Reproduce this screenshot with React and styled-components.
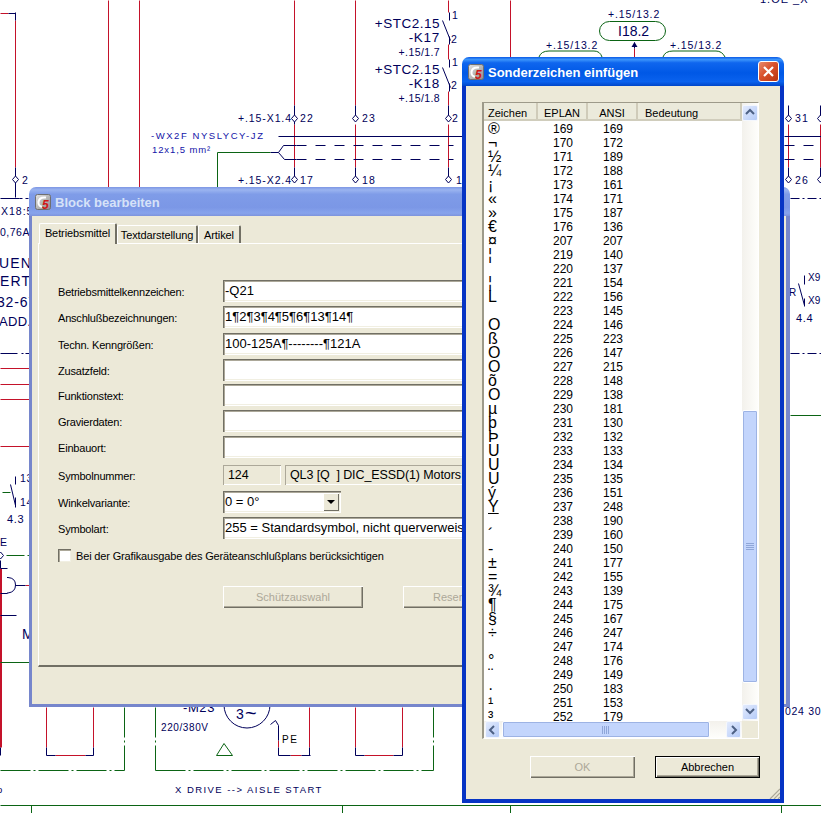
import styled, { createGlobalStyle } from 'styled-components';

const NAVY = '#00005a';
const RED = '#c4122a';
const GREEN = '#0b6414';
const BLUE = '#1414a8';

const GlobalStyle = createGlobalStyle`
  html, body {
    margin: 0;
    padding: 0;
    background: #fff;
  }

  body {
    font-family: "Liberation Sans", Arial, sans-serif;
    font-size: 12px;
    color: #000;
  }
`;

const StyledDesktop = styled.div`
  position: relative;
  width: 821px;
  height: 813px;
  overflow: hidden;
  background: #fff;
`;

const StyledSchematic = styled.svg`
  position: absolute;
  left: 0;
  top: 0;
`;

const StyledSchematicText = styled.text`
  font-family: "Liberation Sans", Arial, sans-serif;
  font-size: ${({ $size }) => $size}px;
  letter-spacing: ${({ $spacing }) => $spacing}px;
  fill: ${({ $color }) => $color};
  text-anchor: ${({ $anchor }) => $anchor};
`;

const StyledWindow = styled.section`
  position: absolute;
  left: ${({ $left }) => $left}px;
  top: ${({ $top }) => $top}px;
  width: ${({ $width }) => $width}px;
  height: ${({ $height }) => $height}px;
  display: flex;
  flex-direction: column;
`;

const StyledTitleBar = styled.header`
  flex: none;
  height: 29px;
  box-sizing: border-box;
  display: flex;
  align-items: center;
  gap: 4px;
  padding: 0 5px 0 6px;
  border-radius: 7px 7px 0 0;
  background: ${({ $active }) =>
    $active
      ? 'linear-gradient(180deg, #0a5ae6 0%, #3c95fb 9%, #0f66ee 20%, #0058e6 55%, #0a62ee 85%, #0046c8 100%)'
      : 'linear-gradient(180deg, #7d96e4 0%, #9ab4f0 10%, #7f9ce8 25%, #7b97e6 70%, #87a3ec 90%, #7d93dc 100%)'};
`;

const StyledTitle = styled.h1`
  flex: 1;
  margin: 0;
  padding-top: 2px;
  font-size: 13px;
  font-weight: 700;
  color: ${({ $active }) => ($active ? '#fff' : '#d6e2f8')};
`;

const StyledClose = styled.button`
  width: 21px;
  height: 21px;
  padding: 0;
  display: grid;
  place-items: center;
  border: 1px solid #fff;
  border-radius: 3px;
  background: linear-gradient(135deg, #e88a6c 0%, #d9512c 45%, #b93410 100%);
`;

const StyledBody = styled.div`
  position: relative;
  flex: 1;
  min-height: 0;
  display: flex;
  flex-direction: column;
  background: #ece9d8;
  border-style: solid;
  border-color: ${({ $active }) => ($active ? '#0634c4' : '#7686cc')};
  border-width: 0 4px 4px 4px;
`;

const StyledBlockBody = styled(StyledBody)`
  border-width: 0 4px 3px 3px;
  padding: 7px 6px 37px 6px;
`;

const StyledTabs = styled.ul`
  flex: none;
  display: flex;
  align-items: flex-end;
  height: 20px;
  margin: 0;
  padding: 0 0 0 1px;
  list-style: none;
`;

const StyledTab = styled.li`
  position: relative;
  z-index: ${({ $selected }) => ($selected ? 1 : 0)};
  height: ${({ $selected }) => ($selected ? '21px' : '18px')};
  margin-bottom: ${({ $selected }) => ($selected ? '-1px' : '0')};
  width: ${({ $width }) => $width}px;
  box-sizing: border-box;
  padding-top: 3px;
  text-align: center;
  font-size: 11px;
  letter-spacing: -0.1px;
  background: #ece9d8;
  border-top: 1px solid #fff;
  border-left: 1px solid #fff;
  border-right: 2px solid #716f64;
  border-radius: 2px 2px 0 0;
`;

const StyledPanel = styled.div`
  flex: 1;
  box-sizing: border-box;
  padding: 36px 19px 0;
  border-top: 1px solid #fff;
  border-left: 1px solid #fff;
  border-right: 2px solid #716f64;
  border-bottom: 2px solid #716f64;
`;

const StyledFormRow = styled.div`
  display: grid;
  grid-template-columns: 165px 1fr;
  align-items: center;
  height: 22px;
  margin-top: ${({ $gap }) => $gap}px;
`;

const StyledLabel = styled.label`
  font-size: 11px;
  letter-spacing: -0.2px;
  padding-top: 1px;
`;

const StyledField = styled.div`
  box-sizing: border-box;
  height: 22px;
  padding: 3px 2px 0;
  font-size: 13px;
  line-height: 16px;
  white-space: pre;
  overflow: hidden;
  background: #fff;
  box-shadow: inset 1px 1px 0 #716f64, inset 2px 2px 0 #aca899, inset -1px -1px 0 #fff, inset -2px -2px 0 #f1efe2;
`;

const StyledSymbolFields = styled.div`
  display: grid;
  grid-template-columns: 58px 1fr;
  gap: 4px;
`;

const StyledReadonlyField = styled(StyledField)`
  height: 20px;
  padding: 2px 5px 0;
  font-size: 12.5px;
  letter-spacing: -0.1px;
  background: #ece9d8;
  box-shadow: inset 1px 1px 0 #aca899, inset -1px -1px 0 #fff;
`;

const StyledSelect = styled(StyledField)`
  width: 118px;
  position: relative;
`;

const StyledSelectArrow = styled.span`
  position: absolute;
  right: 2px;
  top: 2px;
  width: 16px;
  height: 18px;
  display: grid;
  place-items: center;
  background: #ece9d8;
  box-shadow: inset 1px 1px 0 #fff, inset -1px -1px 0 #716f64;

  &::after {
    content: '';
    border-left: 4px solid transparent;
    border-right: 4px solid transparent;
    border-top: 4px solid #000;
  }
`;

const StyledCheckRow = styled.div`
  display: flex;
  align-items: center;
  gap: 5px;
  margin-top: 10px;
  height: 13px;
  font-size: 11px;
  letter-spacing: -0.16px;
`;

const StyledCheckbox = styled.span`
  width: 13px;
  height: 13px;
  box-sizing: border-box;
  background: #fff;
  box-shadow: inset 1px 1px 0 #716f64, inset 2px 2px 0 #aca899, inset -1px -1px 0 #f1efe2;
`;

const StyledFormButtons = styled.div`
  display: flex;
  gap: 40px;
  margin: 24px 0 0 165px;
`;

const StyledButton = styled.button`
  flex: none;
  width: ${({ $width }) => $width}px;
  height: 22px;
  padding: 0;
  font-family: inherit;
  font-size: 11px;
  color: ${({ disabled }) => (disabled ? '#aca899' : '#000')};
  text-align: ${({ $align }) => $align || 'center'};
  padding-left: ${({ $indent }) => $indent || 0}px;
  background: #ece9d8;
  border: ${({ $default }) => ($default ? '1px solid #000' : '0')};
  box-shadow: inset 1px 1px 0 #fff, inset -1px -1px 0 #716f64, inset -2px -2px 0 #aca899;
`;

const StyledListBox = styled.div`
  flex: none;
  width: 277px;
  height: 637px;
  box-sizing: border-box;
  display: grid;
  grid-template-columns: 1fr 16px;
  grid-template-rows: 1fr 17px;
  border-top: 1px solid #9d9a8a;
  border-left: 2px solid #9d9a8a;
  border-right: 1px solid #fff;
  border-bottom: 1px solid #fff;
  background: #fff;
`;

const StyledListPane = styled.div`
  min-width: 0;
  overflow: hidden;
`;

const StyledListHeader = styled.div`
  display: grid;
  grid-template-columns: 54px 50px 50px 1fr;
  height: 18px;
  margin-bottom: 1px;
  background: #ebeadb;
  border-bottom: 2px solid #d0cdbc;
  box-sizing: border-box;
  font-size: 11px;
`;

const StyledHeaderCell = styled.div`
  box-sizing: border-box;
  padding: 4px 0 0 ${({ $indent }) => $indent || 0}px;
  text-align: ${({ $center }) => ($center ? 'center' : 'left')};
  border-right: 2px solid #cfcbb9;
`;

const StyledListRow = styled.div`
  display: grid;
  grid-template-columns: 54px 50px 50px;
  height: 14px;
  line-height: 14px;
`;

const StyledGlyph = styled.span`
  padding-left: 4px;
  font-size: 16px;
  line-height: 14px;
  text-decoration: ${({ $underline }) => ($underline ? 'underline' : 'none')};
`;

const StyledNumber = styled.span`
  text-align: center;
`;

const StyledScrollTrack = styled.div`
  box-sizing: border-box;
  display: flex;
  flex-direction: ${({ $horizontal }) => ($horizontal ? 'row' : 'column')};
  gap: 2px;
  padding: ${({ $horizontal }) => ($horizontal ? '0 1px' : '2px 0 1px')};
  background: ${({ $horizontal }) =>
    $horizontal ? 'linear-gradient(180deg, #f3f1ec, #fefefb)' : 'linear-gradient(90deg, #f3f1ec, #fefefb)'};
`;

const StyledScrollButton = styled.span`
  flex: none;
  width: ${({ $horizontal }) => ($horizontal ? '15px' : '100%')};
  height: ${({ $horizontal }) => ($horizontal ? '100%' : '16px')};
  margin: ${({ $horizontal, $last }) => ($last ? ($horizontal ? '0 0 0 auto' : 'auto 0 0') : '0')};
  box-sizing: border-box;
  display: grid;
  place-items: center;
  border: 1px solid #f4f7fd;
  border-radius: 2px;
  background: linear-gradient(135deg, #e3ebfd, #b5cbf8);
`;

const StyledScrollThumb = styled.span`
  flex: none;
  box-sizing: border-box;
  display: grid;
  place-items: center;
  border: 1px solid #fff;
  border-radius: 2px;
  box-shadow: 0 0 0 1px #9db3e4 inset;
  background: #c3d5fc;
  ${({ $horizontal, $start, $length }) =>
    $horizontal
      ? `width: ${$length}px; height: 100%;`
      : `height: ${$length}px; width: 100%; margin-top: ${$start}px;`}
`;

const StyledScrollCorner = styled.div`
  background: #ece9d8;
`;

const StyledDialogBody = styled(StyledBody)`
  padding: 16px 20px 0 16px;
`;

const StyledDialogButtons = styled.div`
  display: flex;
  justify-content: flex-end;
  gap: 20px;
  margin-top: 17px;
`;

const StyledGrip = styled.svg`
  position: absolute;
  right: 0;
  bottom: 0;
`;

// zeichen, eplan, ansi
const CHARACTERS = [
  ['®', 169, 169],
  ['¬', 170, 172],
  ['½', 171, 189],
  ['¼', 172, 188],
  ['¡', 173, 161],
  ['«', 174, 171],
  ['»', 175, 187],
  ['€', 176, 136],
  ['¤', 207, 207],
  ['¦', 219, 140],
  ['', 220, 137],
  ['¦', 221, 154],
  ['L', 222, 156],
  ['', 223, 145],
  ['O', 224, 146],
  ['ß', 225, 223],
  ['O', 226, 147],
  ['O', 227, 215],
  ['õ', 228, 148],
  ['O', 229, 138],
  ['µ', 230, 181],
  ['þ', 231, 130],
  ['Þ', 232, 132],
  ['U', 233, 133],
  ['U', 234, 134],
  ['U', 235, 135],
  ['ý', 236, 151],
  ['Y', 237, 248],
  ['', 238, 190],
  ['´', 239, 160],
  ['-', 240, 150],
  ['±', 241, 177],
  ['=', 242, 155],
  ['¾', 243, 139],
  ['¶', 244, 175],
  ['§', 245, 167],
  ['÷', 246, 247],
  ['', 247, 174],
  ['°', 248, 176],
  ['¨', 249, 149],
  ['·', 250, 183],
  ['¹', 251, 153],
  ['³', 252, 179],
];

const FORM_FIELDS = [
  ['Betriebsmittelkennzeichen:', '-Q21', 0],
  ['Anschlußbezeichnungen:', '1¶2¶3¶4¶5¶6¶13¶14¶', 4],
  ['Techn. Kenngrößen:', '100-125A¶--------¶121A', 5],
  ['Zusatzfeld:', '', 4],
  ['Funktionstext:', '', 3],
  ['Gravierdaten:', '', 4],
  ['Einbauort:', '', 4],
];

const NAVY_LINES = [
  [8, 13, 15, 13], [15, 12, 15, 20], [15, 167, 15, 176], [294, 105, 294, 115], [294, 121, 294, 124],
  [294, 167, 294, 176], [355, 105, 355, 115], [355, 167, 355, 176], [448, 105, 448, 115], [448, 167, 448, 176],
  [449, 12, 449, 20], [442, 20, 450, 40], [449, 36, 449, 44], [449, 59, 449, 67], [442, 67, 450, 87], [449, 83, 449, 91],
  [278, 136, 463, 136], [270, 152, 278, 152], [278, 152, 283, 145], [283, 145, 296, 145], [278, 152, 284, 159], [284, 159, 296, 159],
  [788, 105, 788, 115], [788, 167, 788, 176], [820, 105, 820, 115], [820, 167, 820, 176], [784, 136, 821, 136],
  [15, 180, 15, 197], [0, 198, 19, 198], [0, 353, 17, 353], [15, 476, 15, 484], [10, 484, 15, 505], [15, 497, 15, 507],
  [804, 275, 804, 284], [798, 283, 804, 305], [804, 298, 804, 306], [0, 560, 0, 568], [0, 568, 7, 568], [0, 593, 7, 593], [15, 585, 25, 585], [0, 615, 16, 615],
  [0, 747, 0, 755], [46, 747, 46, 755], [93, 747, 93, 755], [46, 755, 55, 755], [85, 755, 93, 755],
  [278, 725, 278, 740], [278, 747, 278, 755], [278, 755, 290, 755], [301, 755, 310, 755], [309, 747, 309, 755], [270, 724, 275, 720], [275, 720, 278, 725],
  [355, 747, 355, 755], [402, 747, 402, 755], [355, 755, 364, 755], [393, 755, 402, 755],
  [634, 42, 634, 48],
];

const RED_LINES = [
  [0, 13, 8, 13], [15, 20, 15, 167], [108, 0, 108, 187], [139, 0, 139, 187], [294, 0, 294, 105], [294, 124, 294, 167], [355, 0, 355, 105], [355, 124, 355, 167],
  [448, 0, 448, 12], [448, 44, 448, 59], [448, 91, 448, 105], [448, 124, 448, 167], [510, 0, 510, 57], [634, 48, 634, 57], [788, 124, 788, 167], [820, 124, 820, 167],
  [0, 368, 29, 368], [0, 384, 29, 384], [0, 399, 29, 399], [0, 446, 29, 446], [25, 585, 29, 585],
  [0, 568, 0, 747], [1, 568, 1, 747], [46, 707, 46, 747], [93, 707, 93, 747], [55, 755, 85, 755],
  [278, 740, 278, 747], [290, 755, 301, 755], [309, 707, 309, 747], [355, 707, 355, 747], [402, 707, 402, 747], [364, 755, 393, 755],
];

const GREEN_LINES = [
  [217, 152, 270, 152], [217, 152, 217, 187], [2, 492, 10, 492], [0, 662, 29, 662], [790, 415, 821, 415],
  [0, 805, 821, 805], [31, 805, 31, 813], [342, 805, 342, 813], [510, 805, 510, 813], [781, 805, 781, 813],
];

const LABELS = [
  ['+STC2.15', 440, 28, 13.5, NAVY, 'end', 0.5], ['-K17', 440, 42, 13.5, NAVY, 'end', 0.7], ['+.15/1.7', 440, 56, 10.5, NAVY, 'end', 0.4],
  ['+STC2.15', 440, 74, 13.5, NAVY, 'end', 0.5], ['-K18', 440, 88, 13.5, NAVY, 'end', 0.7], ['+.15/1.8', 440, 102, 10.5, NAVY, 'end', 0.4],
  ['1', 452, 19, 10.5, NAVY], ['2', 451, 43, 10.5, NAVY], ['1', 452, 66, 10.5, NAVY], ['2', 451, 89, 10.5, NAVY],
  ['+.15-X1.4', 238, 122, 10.5, NAVY, 'start', 0.9], ['22', 300, 122, 10.5, NAVY, 'start', 1.2], ['23', 362, 122, 10.5, NAVY, 'start', 1.2], ['2', 452, 122, 10.5, NAVY],
  ['+.15-X2.4', 238, 184, 10.5, NAVY, 'start', 0.9], ['17', 300, 184, 10.5, NAVY, 'start', 1.2], ['18', 362, 184, 10.5, NAVY, 'start', 1.2], ['1', 456, 184, 10.5, NAVY],
  ['-WX2F NYSLYCY-JZ', 151, 139, 9.5, BLUE, 'start', 1.55], ['12x1,5 mm²', 152, 153, 9.5, BLUE, 'start', 0.9],
  ['+.15/13.2', 608, 18, 10.5, NAVY, 'start', 0.9], ['+.15/13.2', 546, 49, 10.5, NAVY, 'start', 0.9], ['+.15/13.2', 670, 49, 10.5, NAVY, 'start', 0.9],
  ['I18.2', 618, 36, 14, NAVY, 'start', 0], ['1.OE _X', 760, 3, 11, NAVY, 'start', 1],
  ['31', 795, 122, 10.5, NAVY, 'start', 1.2], ['26', 795, 184, 10.5, NAVY, 'start', 1.2],
  ['X9', 808, 281, 10, NAVY], ['X9', 808, 304, 10, NAVY], ['R', 789, 296, 10, NAVY], ['4.4', 796, 322, 11, NAVY, 'start', 0.7], ['024 30', 785, 715, 10.5, NAVY, 'start', 0.7],
  ['2', 22, 184, 10.5, NAVY], ['X18:5', 1, 215, 10.5, NAVY, 'start', 1], ['0,76A', 0, 236, 10.5, NAVY, 'start', 0.5],
  ['UENC', -1, 268, 14, NAVY, 'start', 1.2], ['ERT', 0, 286, 14, NAVY, 'start', 1.2], ['32-67', -3, 307, 14, NAVY, 'start', 0.8], ['ADD.', -1, 326, 13, NAVY, 'start', 0.3],
  ['13', 20, 482, 10.5, NAVY, 'start', 0.7], ['14', 20, 506, 10.5, NAVY, 'start', 0.7], ['4.3', 7, 523, 11, NAVY, 'start', 0.7], ['E', 0, 546, 10.5, NAVY],
  ['M', 22, 639, 14, NAVY], ['-M23', 183, 712, 13, NAVY, 'start', 0.6], ['220/380V', 161, 731, 10, NAVY, 'start', 0.6],
  ['3', 236, 719, 14, NAVY], ['~', 245, 720, 20, NAVY], ['PE', 282, 743, 10, '#000', 'start', 1.5],
  ['X DRIVE --> AISLE START', 175, 793, 9.5, NAVY, 'start', 1.45], ['o', -3, 793, 9.5, NAVY],
];

const PINS = [
  [294, 118], [355, 118], [448, 118], [294, 179], [355, 179], [448, 179], [15, 179], [788, 118], [820, 118], [788, 179], [820, 179], [0, 555],
];

const DASHED_LINES = [
  [296, 145, 453, 145, NAVY, '10 9'], [296, 159, 453, 159, NAVY, '10 9'], [784, 145, 821, 145, NAVY, '10 9'], [784, 159, 821, 159, NAVY, '10 9'],
  [19, 198, 29, 198, NAVY, '3 3'], [790, 198, 821, 198, NAVY, '9 3 2 3'], [21, 353, 29, 353, NAVY, '2 2 6'], [790, 353, 821, 353, NAVY, '9 3 2 3'],
  [6, 555, 29, 555, GREEN, '18 3 2 3'], [124, 707, 124, 770, GREEN, '30 3 2 3'], [0, 770, 124, 770, GREEN, '30 3 2 3'],
  [155, 707, 155, 770, GREEN, '30 3 2 3'], [433, 707, 433, 770, GREEN, '30 3 2 3'], [155, 770, 433, 770, GREEN, '30 3 2 3'],
];

function LineGroup({ lines, color }) {
  return lines.map(([x1, y1, x2, y2], index) => (
    <line key={index} x1={x1 + 0.5} y1={y1 + 0.5} x2={x2 + 0.5} y2={y2 + 0.5} stroke={color} />
  ));
}

function Schematic() {
  return (
    <StyledSchematic width="821" height="813" viewBox="0 0 821 813" fill="none">
      <LineGroup lines={RED_LINES} color={RED} />
      <LineGroup lines={NAVY_LINES} color={NAVY} />
      <LineGroup lines={GREEN_LINES} color={GREEN} />
      {DASHED_LINES.map(([x1, y1, x2, y2, color, dash], index) => (
        <line key={index} x1={x1 + 0.5} y1={y1 + 0.5} x2={x2 + 0.5} y2={y2 + 0.5} stroke={color} strokeDasharray={dash} />
      ))}
      {PINS.map(([x, y], index) => (
        <path key={index} d={`M${x + 0.5} ${y - 3}l3 3.5l-3 3.5l-3-3.5z`} fill="#fff" stroke={NAVY} />
      ))}
      <rect x="599.5" y="21.5" width="66" height="19" rx="10" stroke={GREEN} />
      <path d="M634.5 42l3 5h-6z" fill={NAVY} />
      <path d="M539 57Q541 51 549 51H594Q600 51 602 57M663 57Q665 51 673 51H716Q722 51 725 57" stroke={GREEN} />
      <path d="M7 577.5H8Q15.5 578 15.5 585T8 593H7" stroke={NAVY} />
      <circle cx="247" cy="705" r="23" stroke={NAVY} />
      <path d="M216.5 755.5L224 743.5L232.5 755.5Z" stroke={GREEN} />
      {LABELS.map(([text, x, y, size, color, anchor = 'start', spacing = 0], index) => (
        <StyledSchematicText key={index} x={x} y={y} $size={size} $color={color} $anchor={anchor} $spacing={spacing}>
          {text}
        </StyledSchematicText>
      ))}
    </StyledSchematic>
  );
}

function AppIcon() {
  return (
    <svg width="16" height="16" viewBox="0 0 16 16">
      <defs>
        <linearGradient id="appIconFill" x1="0" y1="0" x2="1" y2="1">
          <stop offset="0" stopColor="#e4e4e4" />
          <stop offset="1" stopColor="#8c8c8c" />
        </linearGradient>
      </defs>
      <rect x="0.5" y="0.5" width="15" height="15" rx="2" fill="url(#appIconFill)" stroke="#6f6f6f" />
      <path d="M11 3.5C7 3 4 4.5 3.5 8C3.2 11 5 12.6 7 12.8" fill="none" stroke="#fff" strokeWidth="2" />
      <text x="7" y="14.5" fontFamily="Liberation Sans" fontSize="12" fontWeight="700" fontStyle="italic" fill="#d01818">
        5
      </text>
    </svg>
  );
}

function Arrow({ direction }) {
  const paths = {
    up: 'M1 6L5 2L9 6',
    down: 'M1 2L5 6L9 2',
    left: 'M6 1L2 5L6 9',
    right: 'M3 1L7 5L3 9',
  };

  return (
    <svg width="10" height="10" viewBox="0 0 10 10" fill="none">
      <path d={paths[direction]} stroke="#4d6185" strokeWidth="2" />
    </svg>
  );
}

function GripLines({ horizontal }) {
  return (
    <svg width="8" height="8" viewBox="0 0 8 8" fill="none">
      <path d={horizontal ? 'M.5 0V8M2.5 0V8M4.5 0V8M6.5 0V8' : 'M0 .5H8M0 2.5H8M0 4.5H8M0 6.5H8'} stroke="#8fa6d8" />
    </svg>
  );
}

function BlockWindow() {
  return (
    <StyledWindow $left={29} $top={187} $width={761} $height={520}>
      <StyledTitleBar>
        <AppIcon />
        <StyledTitle>Block bearbeiten</StyledTitle>
      </StyledTitleBar>
      <StyledBlockBody>
        <StyledTabs>
          <StyledTab $selected $width={78}>Betriebsmittel</StyledTab>
          <StyledTab $width={81}>Textdarstellung</StyledTab>
          <StyledTab $width={43}>Artikel</StyledTab>
        </StyledTabs>
        <StyledPanel>
          {FORM_FIELDS.map(([label, value, gap]) => (
            <StyledFormRow key={label} $gap={gap}>
              <StyledLabel>{label}</StyledLabel>
              <StyledField>{value}</StyledField>
            </StyledFormRow>
          ))}
          <StyledFormRow $gap={6}>
            <StyledLabel>Symbolnummer:</StyledLabel>
            <StyledSymbolFields>
              <StyledReadonlyField>124</StyledReadonlyField>
              <StyledReadonlyField>{'QL3 [Q  ] DIC_ESSD(1) Motors'}</StyledReadonlyField>
            </StyledSymbolFields>
          </StyledFormRow>
          <StyledFormRow $gap={5}>
            <StyledLabel>Winkelvariante:</StyledLabel>
            <StyledSelect>
              0 = 0°
              <StyledSelectArrow />
            </StyledSelect>
          </StyledFormRow>
          <StyledFormRow $gap={4}>
            <StyledLabel>Symbolart:</StyledLabel>
            <StyledField>255 = Standardsymbol, nicht querverweis</StyledField>
          </StyledFormRow>
          <StyledCheckRow>
            <StyledCheckbox />
            Bei der Grafikausgabe des Geräteanschlußplans berücksichtigen
          </StyledCheckRow>
          <StyledFormButtons>
            <StyledButton disabled $width={140}>Schützauswahl</StyledButton>
            <StyledButton disabled $width={140} $align="left" $indent={30}>Reserve</StyledButton>
          </StyledFormButtons>
        </StyledPanel>
      </StyledBlockBody>
    </StyledWindow>
  );
}

function CharacterList() {
  return (
    <StyledListBox>
      <StyledListPane>
        <StyledListHeader>
          <StyledHeaderCell $indent={4}>Zeichen</StyledHeaderCell>
          <StyledHeaderCell $center>EPLAN</StyledHeaderCell>
          <StyledHeaderCell $center>ANSI</StyledHeaderCell>
          <StyledHeaderCell $indent={7}>Bedeutung</StyledHeaderCell>
        </StyledListHeader>
        {CHARACTERS.map(([glyph, eplan, ansi]) => (
          <StyledListRow key={eplan}>
            <StyledGlyph $underline={eplan === 237}>{glyph}</StyledGlyph>
            <StyledNumber>{eplan}</StyledNumber>
            <StyledNumber>{ansi}</StyledNumber>
          </StyledListRow>
        ))}
      </StyledListPane>
      <StyledScrollTrack>
        <StyledScrollButton><Arrow direction="up" /></StyledScrollButton>
        <StyledScrollThumb $start={287} $length={273}><GripLines /></StyledScrollThumb>
        <StyledScrollButton $last><Arrow direction="down" /></StyledScrollButton>
      </StyledScrollTrack>
      <StyledScrollTrack $horizontal>
        <StyledScrollButton $horizontal><Arrow direction="left" /></StyledScrollButton>
        <StyledScrollThumb $horizontal $length={208}><GripLines horizontal /></StyledScrollThumb>
        <StyledScrollButton $horizontal $last><Arrow direction="right" /></StyledScrollButton>
      </StyledScrollTrack>
      <StyledScrollCorner />
    </StyledListBox>
  );
}

function CharacterDialog() {
  return (
    <StyledWindow $left={462} $top={57} $width={322} $height={746}>
      <StyledTitleBar $active>
        <AppIcon />
        <StyledTitle $active>Sonderzeichen einfügen</StyledTitle>
        <StyledClose aria-label="Schließen">
          <svg width="13" height="13" viewBox="0 0 13 13" fill="none">
            <path d="M2 2L11 11M11 2L2 11" stroke="#fff" strokeWidth="2.2" />
          </svg>
        </StyledClose>
      </StyledTitleBar>
      <StyledDialogBody $active>
        <CharacterList />
        <StyledDialogButtons>
          <StyledButton disabled $width={105}>OK</StyledButton>
          <StyledButton $default $width={105}>Abbrechen</StyledButton>
        </StyledDialogButtons>
        <StyledGrip width="11" height="11" viewBox="0 0 11 11" fill="none">
          <path d="M1 11L11 1M5 11L11 5M9 11L11 9" stroke="#aca899" strokeWidth="1.2" />
        </StyledGrip>
      </StyledDialogBody>
    </StyledWindow>
  );
}

function App() {
  return (
    <>
      <GlobalStyle />
      <StyledDesktop>
        <Schematic />
        <BlockWindow />
        <CharacterDialog />
      </StyledDesktop>
    </>
  );
}

export default App;
